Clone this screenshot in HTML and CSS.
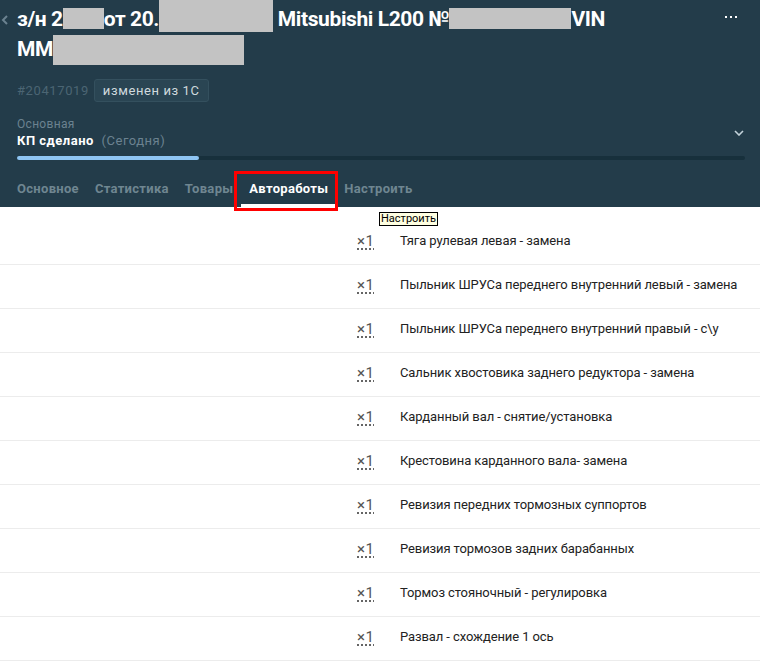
FILE: index.html
```html
<!DOCTYPE html>
<html lang="ru">
<head>
    <meta charset="UTF-8">
    <meta name="viewport" content="width=device-width, initial-scale=1.0">
    <title>Заказ-наряд</title>
    <link rel="stylesheet" href="styles.css">
</head>
<body>
    <div class="page">
        <header class="order-head">
            <div class="title-row">
                <a class="back" href="#">
                    <svg width="8" height="10" viewBox="0 0 8 10"><path d="M6 1 L2 5 L6 9" fill="none" stroke="#6b8290" stroke-width="2"/></svg>
                </a>
                <h1 class="title">з/н 2<span class="redact r1"></span>от 20.<span class="redact r2"></span> Mitsubishi L200 №<span class="redact r3"></span>VIN<br>MM<span class="redact r4"></span></h1>
                <a class="more" href="#">
                    <svg width="12" height="4" viewBox="0 0 12 4"><rect x="0" y="1" width="2" height="2" fill="#fff"/><rect x="5" y="1" width="2" height="2" fill="#fff"/><rect x="10" y="1" width="2" height="2" fill="#fff"/></svg>
                </a>
            </div>
            <div class="meta">
                <span class="order-num">#20417019</span>
                <span class="badge">изменен из 1С</span>
            </div>
            <div class="stage">
                <div>
                    <div class="stage-label">Основная</div>
                    <div class="stage-name"><b>КП сделано</b> <span class="stage-date">(Сегодня)</span></div>
                </div>
                <svg class="chevron" width="10" height="6" viewBox="0 0 10 6"><path d="M1 1 L5 5 L9 1" fill="none" stroke="#c3d2da" stroke-width="1.6"/></svg>
            </div>
            <div class="progress"><div class="progress-fill" style="width: 25%"></div></div>
            <nav class="tabs">
                <a class="tab" href="#">Основное</a>
                <a class="tab" href="#">Статистика</a>
                <a class="tab" href="#">Товары</a>
                <a class="tab active" href="#">Автоработы<span class="mark"></span></a>
                <a class="tab" href="#">Настроить</a>
            </nav>
        </header>

        <span class="tooltip">Настроить</span>

        <ul class="work-list">
            <li class="work-row"><span class="qty">×1</span><span class="work-name">Тяга рулевая левая - замена</span></li>
            <li class="work-row"><span class="qty">×1</span><span class="work-name">Пыльник ШРУСа переднего внутренний левый - замена</span></li>
            <li class="work-row"><span class="qty">×1</span><span class="work-name">Пыльник ШРУСа переднего внутренний правый - с\у</span></li>
            <li class="work-row"><span class="qty">×1</span><span class="work-name">Сальник хвостовика заднего редуктора - замена</span></li>
            <li class="work-row"><span class="qty">×1</span><span class="work-name">Карданный вал - снятие/установка</span></li>
            <li class="work-row"><span class="qty">×1</span><span class="work-name">Крестовина карданного вала- замена</span></li>
            <li class="work-row"><span class="qty">×1</span><span class="work-name">Ревизия передних тормозных суппортов</span></li>
            <li class="work-row"><span class="qty">×1</span><span class="work-name">Ревизия тормозов задних барабанных</span></li>
            <li class="work-row"><span class="qty">×1</span><span class="work-name">Тормоз стояночный - регулировка</span></li>
            <li class="work-row"><span class="qty">×1</span><span class="work-name">Развал - схождение 1 ось</span></li>
        </ul>
    </div>
</body>
</html>
```

FILE: styles.css
```css
body {
    margin: 0;
    font-family: Roboto, "Noto Sans", sans-serif;
    background-color: #fff;
    overflow: hidden;
}

.page {
    position: relative;
}

a {
    text-decoration: none;
}

.order-head {
    background-color: #233c4a;
    padding: 0 15px 0 17px;
    color: #fff;
}

.title-row {
    display: flex;
    align-items: flex-start;
    margin-left: -17px;
}

.back {
    width: 17px;
    padding: 10px 0 0 1px;
    box-sizing: border-box;
}

.title {
    flex: 1;
    margin: 0;
    font-size: 21px;
    font-weight: bold;
    line-height: 30px;
    letter-spacing: -0.4px;
}

.redact {
    display: inline-block;
    background-color: #c3c3c3;
    vertical-align: -3px;
}

.r1 { width: 41px; height: 21px; }
.r2 { width: 114px; height: 32px; vertical-align: -6px; }
.r3 { width: 122px; height: 21px; }
.r4 { width: 191px; height: 30px; vertical-align: -9px; }

.more {
    display: flex;
    padding: 15px 8px 0 0;
}

.meta {
    display: flex;
    align-items: center;
    gap: 5px;
    margin-top: 14px;
    height: 23px;
}

.order-num {
    color: #4b6573;
    font-size: 13px;
    letter-spacing: 0.6px;
}

.badge {
    background-color: #2a4553;
    border: 1px solid #34505e;
    border-radius: 3px;
    color: #d0dade;
    font-size: 13px;
    padding: 2px 8px;
    line-height: 17px;
    letter-spacing: 0.6px;
}

.stage {
    display: flex;
    justify-content: space-between;
    align-items: center;
    margin-top: 14px;
}

.stage-label {
    color: #6b8290;
    font-size: 12px;
    line-height: 16px;
    letter-spacing: 0.3px;
}

.stage-name {
    font-size: 13px;
    line-height: 18px;
    letter-spacing: 0.5px;
}

.stage-date {
    color: #6b8290;
    margin-left: 4px;
}

.chevron {
    margin-right: 1px;
}

.progress {
    margin-top: 6px;
    height: 4px;
    background-color: #17303c;
    border-radius: 2px;
}

.progress-fill {
    height: 100%;
    background-color: #8ec5f3;
    border-radius: 2px;
}

.tabs {
    display: flex;
    margin-left: -8px;
    height: 47px;
}

.tab {
    position: relative;
    padding: 21px 8px 0;
    color: #6f8691;
    font-size: 13px;
    font-weight: bold;
    line-height: 16px;
    border-bottom: 3px solid transparent;
    letter-spacing: 0.3px;
}

.tab.active {
    color: #fff;
    border-bottom-color: #fff;
}

.mark {
    position: absolute;
    left: -7px;
    right: -2px;
    top: 11px;
    bottom: -7px;
    border: 3px solid #f00;
}

.tooltip {
    position: absolute;
    left: 379px;
    top: 212px;
    background-color: #ffffe1;
    border: 1px solid #000;
    color: #000;
    font-size: 11px;
    line-height: 12px;
    padding: 0 1px;
}

.work-list {
    list-style: none;
    margin: 0;
    padding: 14px 0 0;
}

.work-row {
    display: flex;
    align-items: center;
    height: 44px;
    box-sizing: border-box;
    padding: 0 0 4px 357px;
    border-bottom: 1px solid #ececec;
    font-size: 13px;
}

.qty {
    width: 43px;
    color: #555;
    font-size: 15px;
    letter-spacing: 0.5px;
    text-decoration: underline dotted #333;
    text-underline-offset: 3px;
}

.work-name {
    color: #222;
    letter-spacing: -0.1px;
}
```
